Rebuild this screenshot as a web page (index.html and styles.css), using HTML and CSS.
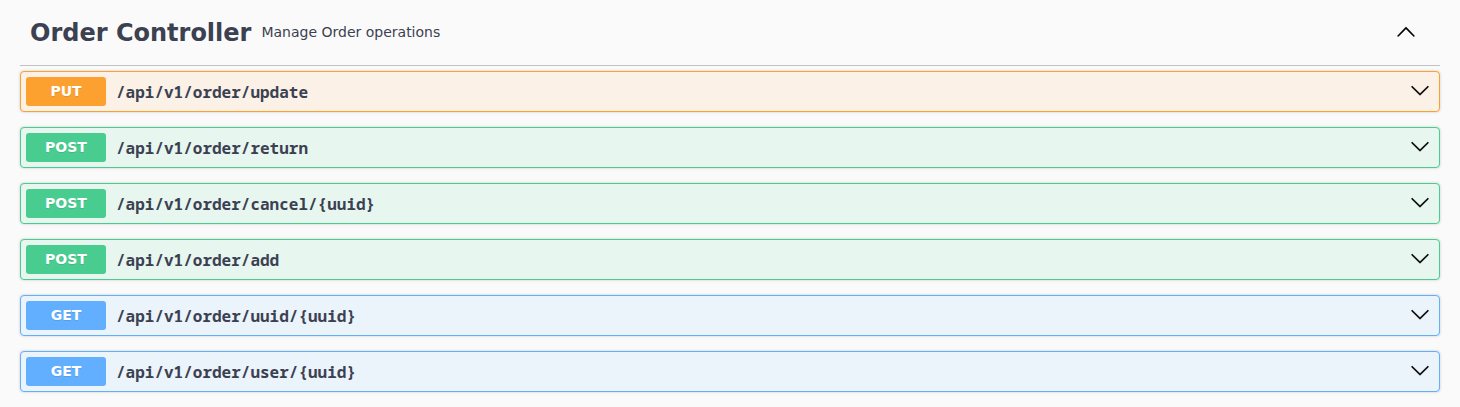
FILE: index.html
```html
<!DOCTYPE html>
<html lang="en">
<head>
<meta charset="utf-8">
<title>Order Controller</title>
<link rel="stylesheet" href="styles.css">
</head>
<body>
<main class="wrapper">
<section class="tag-section">
<header class="tag-header">
<h3 class="tag-title">Order Controller</h3>
<p class="tag-description">Manage Order operations</p>
<button class="toggle" type="button" aria-expanded="true" aria-label="Collapse operations"><svg class="arrow" viewBox="0 0 20 20" aria-hidden="true"><path d="M17.418 13.408c.272.281.701.281.979 0s.271-.736 0-1.018l-7.908-8.131a.697.697 0 0 0-.978 0l-7.908 8.131c-.271.282-.271.737 0 1.018s.701.281.979 0L10 5.990z"/></svg></button>
</header>
<div class="operations">
<button class="operation put" type="button" aria-expanded="false"><span class="method">PUT</span><span class="path">/api/v1/order/update</span><svg class="arrow" viewBox="0 0 20 20" aria-hidden="true"><path d="M17.418 4.309c.272-.268.709-.268.979 0s.271.701 0 .969l-7.908 7.830c-.27.268-.707.268-.979 0l-7.908-7.830c-.27-.268-.27-.701 0-.969s.709-.268.979 0L10 11.450z"/></svg></button>
<button class="operation post" type="button" aria-expanded="false"><span class="method">POST</span><span class="path">/api/v1/order/return</span><svg class="arrow" viewBox="0 0 20 20" aria-hidden="true"><path d="M17.418 4.309c.272-.268.709-.268.979 0s.271.701 0 .969l-7.908 7.830c-.27.268-.707.268-.979 0l-7.908-7.830c-.27-.268-.27-.701 0-.969s.709-.268.979 0L10 11.450z"/></svg></button>
<button class="operation post" type="button" aria-expanded="false"><span class="method">POST</span><span class="path">/api/v1/order/cancel/{uuid}</span><svg class="arrow" viewBox="0 0 20 20" aria-hidden="true"><path d="M17.418 4.309c.272-.268.709-.268.979 0s.271.701 0 .969l-7.908 7.830c-.27.268-.707.268-.979 0l-7.908-7.830c-.27-.268-.27-.701 0-.969s.709-.268.979 0L10 11.450z"/></svg></button>
<button class="operation post" type="button" aria-expanded="false"><span class="method">POST</span><span class="path">/api/v1/order/add</span><svg class="arrow" viewBox="0 0 20 20" aria-hidden="true"><path d="M17.418 4.309c.272-.268.709-.268.979 0s.271.701 0 .969l-7.908 7.830c-.27.268-.707.268-.979 0l-7.908-7.830c-.27-.268-.27-.701 0-.969s.709-.268.979 0L10 11.450z"/></svg></button>
<button class="operation get" type="button" aria-expanded="false"><span class="method">GET</span><span class="path">/api/v1/order/uuid/{uuid}</span><svg class="arrow" viewBox="0 0 20 20" aria-hidden="true"><path d="M17.418 4.309c.272-.268.709-.268.979 0s.271.701 0 .969l-7.908 7.830c-.27.268-.707.268-.979 0l-7.908-7.830c-.27-.268-.27-.701 0-.969s.709-.268.979 0L10 11.450z"/></svg></button>
<button class="operation get" type="button" aria-expanded="false"><span class="method">GET</span><span class="path">/api/v1/order/user/{uuid}</span><svg class="arrow" viewBox="0 0 20 20" aria-hidden="true"><path d="M17.418 4.309c.272-.268.709-.268.979 0s.271.701 0 .969l-7.908 7.830c-.27.268-.707.268-.979 0l-7.908-7.830c-.27-.268-.27-.701 0-.969s.709-.268.979 0L10 11.450z"/></svg></button>
</div>
</section>
</main>
</body>
</html>
```
FILE: styles.css
```css
* { box-sizing: border-box; }
body {
  margin: 0;
  background: #fafafa;
  color: #3b4151;
  font-family: "DejaVu Sans", sans-serif;
}
.wrapper { padding: 0 20px; }
.tag-header {
  display: flex;
  align-items: center;
  gap: 10px;
  padding: 19px 20px 18px 10px;
  border-bottom: 1px solid rgba(59, 65, 81, .3);
}
.tag-title { margin: 0; font-size: 24px; line-height: 28px; }
.tag-description { flex: 1; margin: 0; padding-bottom: 2px; font-size: 14px; line-height: 20px; }
.toggle {
  display: flex;
  padding: 4px;
  border: 0;
  background: none;
  color: #000;
  cursor: pointer;
}
.arrow { display: block; width: 20px; height: 20px; fill: #000; stroke: #000; stroke-width: .2; flex: none; }
.operations { display: grid; gap: 15px; padding: 5px 0 15px; }
.operation {
  display: flex;
  align-items: center;
  width: 100%;
  padding: 5px 9px 5px 5px;
  border: 1px solid var(--accent);
  border-radius: 4px;
  background: var(--tint);
  box-shadow: 0 0 3px rgba(0, 0, 0, .19);
  color: #3b4151;
  text-align: left;
  cursor: pointer;
}
.method {
  width: 80px;
  padding: 6px 0;
  border-radius: 3px;
  background: var(--accent);
  color: #fff;
  font: bold 14px/17px "DejaVu Sans", sans-serif;
  text-align: center;
  text-shadow: 0 1px 0 rgba(0, 0, 0, .1);
}
.path {
  flex: 1;
  padding: 0 10px;
  font: bold 16px/24px "Noto Sans Mono", "DejaVu Sans Mono", monospace;
  overflow-wrap: anywhere;
}
.put { --accent: #fca130; --tint: #fbf1e6; }
.post { --accent: #49cc90; --tint: #e8f6f0; }
.get { --accent: #61affe; --tint: #ebf3fb; }
```
